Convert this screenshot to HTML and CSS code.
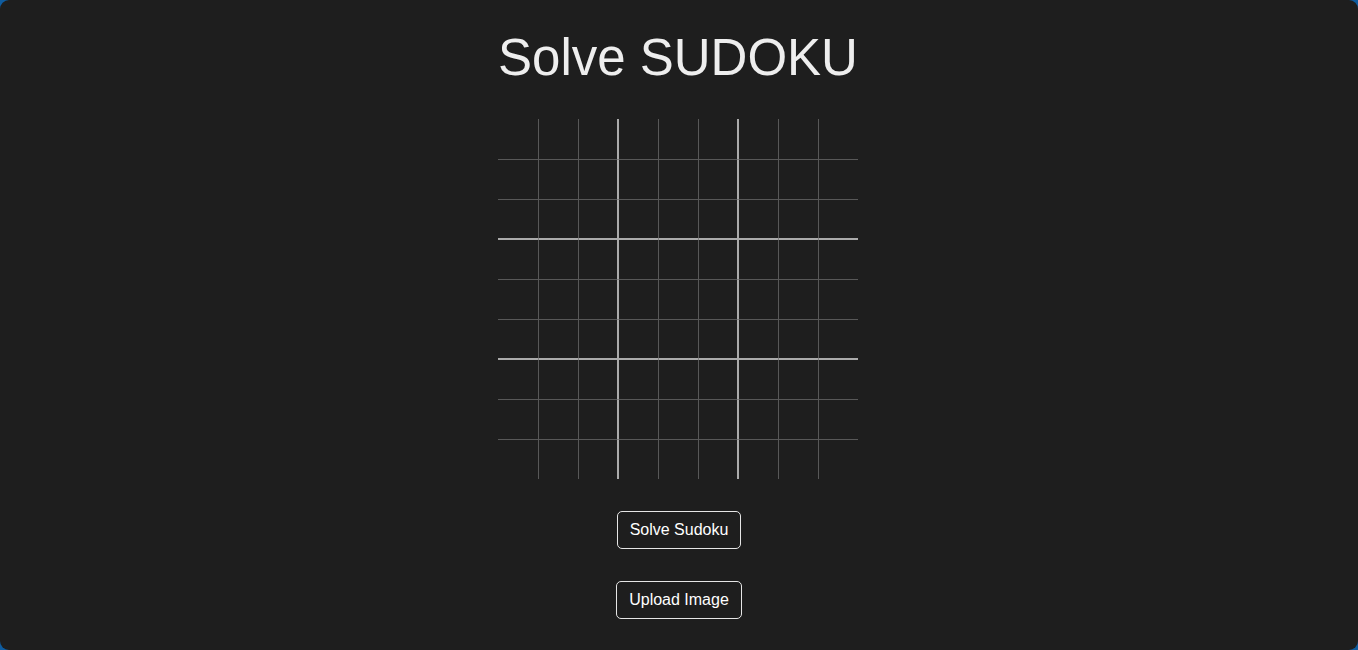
FILE: index.html
```html
<!DOCTYPE html>
<html lang="en">
<head>
<meta charset="utf-8">
<title>Solve SUDOKU</title>
<link rel="stylesheet" href="styles.css">
</head>
<body>
<main class="app">
  <h1 class="title">Solve SUDOKU</h1>
  <div class="board">
    <div class="cell"></div><div class="cell"></div><div class="cell"></div><div class="cell"></div><div class="cell"></div><div class="cell"></div><div class="cell"></div><div class="cell"></div><div class="cell"></div>
    <div class="cell"></div><div class="cell"></div><div class="cell"></div><div class="cell"></div><div class="cell"></div><div class="cell"></div><div class="cell"></div><div class="cell"></div><div class="cell"></div>
    <div class="cell"></div><div class="cell"></div><div class="cell"></div><div class="cell"></div><div class="cell"></div><div class="cell"></div><div class="cell"></div><div class="cell"></div><div class="cell"></div>
    <div class="cell"></div><div class="cell"></div><div class="cell"></div><div class="cell"></div><div class="cell"></div><div class="cell"></div><div class="cell"></div><div class="cell"></div><div class="cell"></div>
    <div class="cell"></div><div class="cell"></div><div class="cell"></div><div class="cell"></div><div class="cell"></div><div class="cell"></div><div class="cell"></div><div class="cell"></div><div class="cell"></div>
    <div class="cell"></div><div class="cell"></div><div class="cell"></div><div class="cell"></div><div class="cell"></div><div class="cell"></div><div class="cell"></div><div class="cell"></div><div class="cell"></div>
    <div class="cell"></div><div class="cell"></div><div class="cell"></div><div class="cell"></div><div class="cell"></div><div class="cell"></div><div class="cell"></div><div class="cell"></div><div class="cell"></div>
    <div class="cell"></div><div class="cell"></div><div class="cell"></div><div class="cell"></div><div class="cell"></div><div class="cell"></div><div class="cell"></div><div class="cell"></div><div class="cell"></div>
    <div class="cell"></div><div class="cell"></div><div class="cell"></div><div class="cell"></div><div class="cell"></div><div class="cell"></div><div class="cell"></div><div class="cell"></div><div class="cell"></div>
  </div>
  <button class="btn" type="button">Solve Sudoku</button>
  <button class="btn" type="button">Upload Image</button>
</main>
</body>
</html>
```

FILE: styles.css
```css
html {
  background: #0f5c9f;
  height: 100%;
}

body {
  margin: 0;
  height: 100%;
  font-family: "Liberation Sans", Arial, sans-serif;
}

.app {
  box-sizing: border-box;
  height: 650px;
  background: #1e1e1e;
  border-radius: 9px;
  display: flex;
  flex-direction: column;
  align-items: center;
  padding-top: 29px;
  color: #eeeeee;
}

.title {
  margin: 0 2px 0 0;
  font-size: 51px;
  line-height: 57px;
  font-weight: 400;
  color: #eeeeee;
}

.board {
  margin: 33px 2px 0 0;
  width: 360px;
  height: 360px;
  display: grid;
  grid-template-columns: repeat(9, 40px);
  grid-template-rows: repeat(9, 40px);
}

.cell {
  box-sizing: border-box;
}

/* thin inner lines */
.cell:not(:nth-child(9n+1)) {
  border-left: 1px solid #585858;
}
.cell:nth-child(n+10) {
  border-top: 1px solid #585858;
}

/* thick box lines (2px split across neighbouring cells) */
.cell:nth-child(9n+3),
.cell:nth-child(9n+6) {
  border-right: 1px solid #ababab;
}
.cell:nth-child(9n+4),
.cell:nth-child(9n+7) {
  border-left-color: #ababab;
}
.cell:nth-child(n+19):nth-child(-n+27),
.cell:nth-child(n+46):nth-child(-n+54) {
  border-bottom: 1px solid #ababab;
}
.cell:nth-child(n+28):nth-child(-n+36),
.cell:nth-child(n+55):nth-child(-n+63) {
  border-top-color: #ababab;
}

.btn {
  margin-top: 32px;
  box-sizing: border-box;
  height: 38px;
  padding: 0 12px;
  background: transparent;
  color: #ffffff;
  border: 1px solid #e6e6e6;
  border-radius: 5px;
  font-family: "Liberation Sans", Arial, sans-serif;
  font-size: 16px;
  line-height: 18px;
  cursor: pointer;
}
```
